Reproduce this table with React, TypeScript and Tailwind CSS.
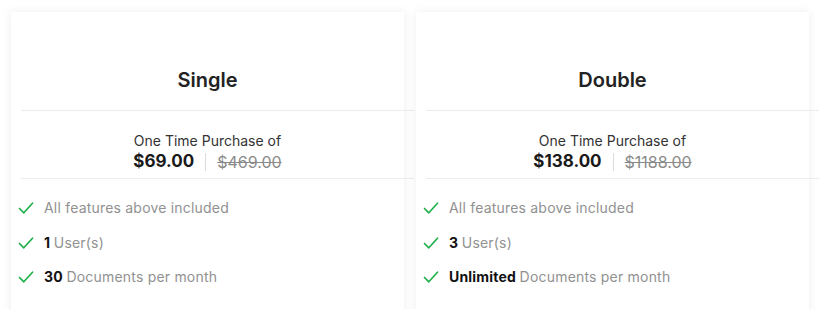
import React from 'react';

interface Plan {
  name: string;
  price: string;
  oldPrice: string;
  users: string;
  docs: string;
}

const plans: Plan[] = [
  { name: 'Single', price: '$69.00', oldPrice: '$469.00', users: '1', docs: '30' },
  { name: 'Double', price: '$138.00', oldPrice: '$1188.00', users: '3', docs: 'Unlimited' },
];

const Check = () => (
  <svg className="w-4 h-4 shrink-0 mr-[10px]" viewBox="0 0 16 16" fill="none">
    <path d="M1.5 8.5 L5.8 12.8 L14.5 3.2" stroke="#1fb14a" strokeWidth="1.7" strokeLinecap="round" strokeLinejoin="round" />
  </svg>
);

const Feature: React.FC<{ bold?: string; text: string }> = ({ bold, text }) => (
  <div className="flex items-center h-5 pl-[7px]">
    <Check />
    <span className="text-[14px] leading-5 tracking-[0.2px] text-[#919191]">
      {bold && <span className="font-bold text-[#111]">{bold} </span>}
      {text}
    </span>
  </div>
);

const PlanCard: React.FC<{ plan: Plan }> = ({ plan }) => (
  <div className="w-[393px] h-[320px] bg-white shadow-[0_0_10px_rgba(0,0,0,0.07)]">
    <h3 className="pt-[54px] pb-[16px] text-center text-[20px] leading-7 font-semibold text-[#222]">{plan.name}</h3>
    <div className="ml-[10px] w-full h-px bg-[#ececec]" />
    <div className="pt-[21px] pb-[6px] text-center">
      <div className="text-[14px] leading-[18px] text-[#333]">One Time Purchase of</div>
      <div className="mt-[2px] flex items-center justify-center h-5">
        <span className="text-[17px] font-bold text-[#1a1a1a]">{plan.price}</span>
        <span className="mx-[11px] w-px h-[18px] bg-[#dcdcdc]" />
        <span className="text-[16px] text-[#8a8a8a] line-through">{plan.oldPrice}</span>
      </div>
    </div>
    <div className="ml-[10px] w-full h-px bg-[#ececec]" />
    <div className="pt-[19px] flex flex-col gap-[14.5px]">
      <Feature text="All features above included" />
      <Feature bold={plan.users} text="User(s)" />
      <Feature bold={plan.docs} text="Documents per month" />
    </div>
  </div>
);

export default function App() {
  return (
    <div className="w-[822px] h-[309px] overflow-hidden bg-white pl-[11px] pt-3 flex gap-3" style={{ fontFamily: 'Inter, "Noto Sans", sans-serif' }}>
      {plans.map((p) => (
        <PlanCard key={p.name} plan={p} />
      ))}
    </div>
  );
}
